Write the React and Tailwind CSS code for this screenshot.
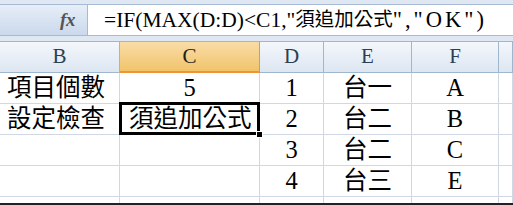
const serif = { fontFamily: '"Liberation Serif", "Noto Sans CJK TC", serif' };

const COLS = [
  { key: 'B', w: 'w-[120px]' },
  { key: 'C', w: 'w-[140px]' },
  { key: 'D', w: 'w-[64px]' },
  { key: 'E', w: 'w-[88px]' },
  { key: 'F', w: 'w-[87px]' },
  { key: 'G', w: 'flex-1' },
];

const ROWS = [
  ['項目個數', '5', '1', '台一', 'A'],
  ['設定檢查', '須追加公式', '2', '台二', 'B'],
  ['', '', '3', '台二', 'C'],
  ['', '', '4', '台三', 'E'],
  ['', '', '', '', ''],
];

function HeaderCell({ col }) {
  const sel = col.key === 'C';
  return (
    <div
      className={`${col.w} h-full flex items-center justify-center text-[21px] border-r border-b ${
        sel
          ? 'bg-gradient-to-b from-[#f9dca6] to-[#f1c46a] border-r-[#f29436] border-b-[#f29436] border-b-2 text-[#202020]'
          : 'bg-gradient-to-b from-[#f4f7fb] to-[#dde6f2] border-r-[#9eb6ce] border-b-[#9eb6ce] text-[#2a3f52]'
      }`}
    >
      {col.key === 'G' ? '' : col.key}
    </div>
  );
}

export default function App() {
  return (
    <div className="w-[513px] h-[205px] bg-white overflow-hidden text-black relative" style={serif}>
      {/* formula bar */}
      <div className="h-[41px] bg-[#dfe7f2] pt-[4px] pb-[5px]">
        <div className="flex h-[32px] border-y border-[#a7bad3]">
          <div className="w-[88px] h-full bg-gradient-to-b from-[#e6eef8] to-[#cbd9ec] border-r border-[#a7bad3] flex items-center justify-end pr-[12px]">
            <span className="italic font-bold text-[19px] text-[#555] tracking-tight">fx</span>
          </div>
          <div className="flex-1 bg-white flex items-center pl-[16px] text-[21.5px] whitespace-nowrap overflow-hidden">
            <span>=IF(MAX(D:D)&lt;C1,"</span>
            <span className="text-[19.5px]">須追加公式</span>
            <span className="text-[22.5px] tracking-[3px]">","OK")</span>
          </div>
        </div>
      </div>

      {/* column headers */}
      <div className="flex h-[32px] border-t border-[#9eb6ce]">
        {COLS.map((c) => (
          <HeaderCell key={c.key} col={c} />
        ))}
      </div>

      {/* rows */}
      {ROWS.map((r, ri) => (
        <div key={ri} className="flex h-[31px]">
          {COLS.map((c, ci) => {
            const v = r[ci] || '';
            const active = ci === 1 && ri === 1;
            const left = ci === 0 || active;
            return (
              <div
                key={c.key}
                className={`${c.w} h-full relative border-r border-b border-[#d0d7e5] flex items-center text-[24.5px] leading-none whitespace-nowrap ${
                  left ? (ci === 0 ? 'justify-start pl-[7px]' : 'justify-start pl-[9px]') : 'justify-center'
                } ${active ? 'z-10' : ''}`}
              >
                {v}
                {active && (
                  <>
                    <div className="absolute -left-[1px] -top-[2px] -right-[1px] -bottom-[1px] border-[3px] border-black" />
                    <div className="absolute -right-[4px] -bottom-[4px] w-[7px] h-[7px] bg-black border border-white" />
                  </>
                )}
              </div>
            );
          })}
        </div>
      ))}
      <div className="absolute left-0 right-0 bottom-0 h-[2px] bg-[#222]" />
    </div>
  );
}
